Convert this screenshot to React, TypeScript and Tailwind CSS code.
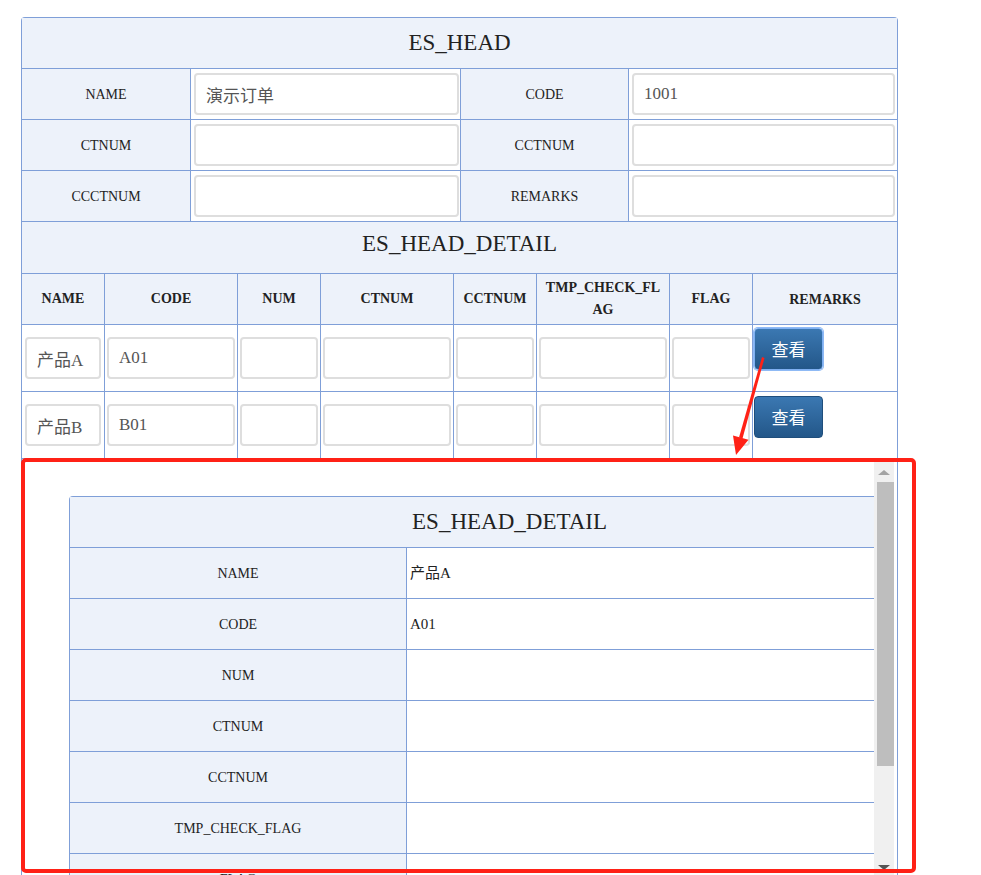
import React from "react";

const SERIF = "font-['Liberation_Serif','Noto_Sans_CJK_SC',serif]";
const LINE = "border-[#7f9fd8]";

const HEAD_ROWS = [
  ["NAME", "演示订单", "CODE", "1001"],
  ["CTNUM", "", "CCTNUM", ""],
  ["CCCTNUM", "", "REMARKS", ""],
];

const COLS = [
  { label: "NAME", w: "w-[82px]", iw: "w-[76px] ml-[3px]" },
  { label: "CODE", w: "w-[133px]", iw: "w-[128px] ml-[2px]" },
  { label: "NUM", w: "w-[83px]", iw: "w-[78px] ml-[2px]" },
  { label: "CTNUM", w: "w-[133px]", iw: "w-[128px] ml-[2px]" },
  { label: "CCTNUM", w: "w-[83px]", iw: "w-[78px] ml-[2px]" },
  { label: "TMP_CHECK_FLAG", w: "w-[133px]", iw: "w-[128px] ml-[2px]" },
  { label: "FLAG", w: "w-[83px]", iw: "w-[78px] ml-[2px]" },
];

const ITEMS = [
  ["产品A", "A01"],
  ["产品B", "B01"],
];

const POPUP_ROWS = [
  ["NAME", "产品A"],
  ["CODE", "A01"],
  ["NUM", ""],
  ["CTNUM", ""],
  ["CCTNUM", ""],
  ["TMP_CHECK_FLAG", ""],
  ["FLAG", ""],
  ["REMARKS", ""],
];

function Field({ value, className }: { value: string; className: string }) {
  return (
    <input
      readOnly
      value={value}
      className={`${className} h-[42px] rounded-[4px] border-2 border-[#dedede] bg-white pl-[10px] text-[17px] text-[#555] outline-none ${SERIF}`}
    />
  );
}

function Title({ text, className = "" }: { text: string; className?: string }) {
  return (
    <div className={`flex items-center justify-center bg-[#edf2fa] text-[23px] text-[#222] ${SERIF} ${className}`}>
      {text}
    </div>
  );
}

function ViewButton({ focused }: { focused?: boolean }) {
  return (
    <button
      className={`h-[42px] w-[69px] rounded-[4px] border bg-gradient-to-b from-[#3b78b2] to-[#235789] text-[17px] text-white font-['Noto_Sans_CJK_SC',sans-serif] ${
        focused ? "border-[#7fb0f2] ring-1 ring-[#8fbaf5]" : "border-[#1f4e7c]"
      }`}
    >
      查看
    </button>
  );
}

function Scrollbar() {
  return (
    <div className="flex h-full w-[20px] shrink-0 flex-col items-center bg-[#f0f0f0]">
      <div className="mt-[8px] h-0 w-0 border-x-[6px] border-b-[5px] border-x-transparent border-b-[#a3a3a3]" />
      <div className="mt-[7px] ml-[2px] h-[284px] w-[17px] bg-[#bebebe]" />
      <div className="flex-1" />
      <div className="mb-[12px] h-0 w-0 border-x-[6px] border-t-[5px] border-x-transparent border-t-[#555]" />
    </div>
  );
}

export default function App() {
  return (
    <div className="relative h-[875px] w-[981px] overflow-hidden bg-white pl-[21px] pt-[17px]">
      {/* Main form */}
      <div className={`w-[877px] rounded-tl-[4px] rounded-tr-[4px] border-x border-t ${LINE}`}>
        <Title text="ES_HEAD" className="h-[50px]" />
        {HEAD_ROWS.map(([l1, v1, l2, v2]) => (
          <div key={l1} className={`flex h-[51px] border-t ${LINE}`}>
            <div className={`flex w-[168px] items-center justify-center bg-[#edf2fa] text-[14px] text-[#222] ${SERIF}`}>{l1}</div>
            <div className={`flex w-[270px] items-center border-l ${LINE}`}>
              <Field value={v1} className="ml-[3px] w-[265px]" />
            </div>
            <div className={`flex w-[168px] items-center justify-center border-l bg-[#edf2fa] text-[14px] text-[#222] ${LINE} ${SERIF}`}>{l2}</div>
            <div className={`flex w-[269px] items-center border-l ${LINE}`}>
              <Field value={v2} className="ml-[3px] w-[263px]" />
            </div>
          </div>
        ))}

        <div className={`border-t ${LINE}`}>
          <Title text="ES_HEAD_DETAIL" className="h-[51px] pb-[7px]" />
        </div>

        {/* Detail header */}
        <div className={`flex h-[51px] border-t bg-[#edf2fa] ${LINE}`}>
          {COLS.map((c, i) => (
            <div
              key={c.label}
              className={`flex ${c.w} items-center justify-center break-all px-[6px] text-center text-[14px] font-bold leading-[22px] text-[#222] ${SERIF} ${i ? `border-l ${LINE}` : ""}`}
            >
              {c.label}
            </div>
          ))}
          <div className={`flex w-[145px] items-center justify-center border-l text-[14px] font-bold text-[#222] ${LINE} ${SERIF}`}>
            REMARKS
          </div>
        </div>

        {ITEMS.map(([name, code], r) => (
          <div key={name} className={`flex h-[67px] border-t ${LINE}`}>
            {COLS.map((c, i) => (
              <div key={c.label} className={`flex ${c.w} items-center ${i ? `border-l ${LINE}` : ""}`}>
                <Field value={i === 0 ? name : i === 1 ? code : ""} className={c.iw} />
              </div>
            ))}
            <div className={`w-[145px] border-l pl-[1px] ${LINE} ${r === 0 ? "pt-[3px]" : "pt-[4px]"}`}>
              <ViewButton focused={r === 0} />
            </div>
          </div>
        ))}
        <div className={`h-[420px] border-t ${LINE}`} />
      </div>

      {/* Detail popup layer */}
      <div className="absolute left-[22px] top-[462px] flex h-[420px] w-[872px] bg-white">
        <div className="flex-1 overflow-hidden pl-[47px] pt-[34px]">
          <div className={`w-[880px] rounded-tl-[4px] border-l border-t ${LINE}`}>
            <Title text="ES_HEAD_DETAIL" className="h-[50px]" />
            {POPUP_ROWS.map(([label, value]) => (
              <div key={label} className={`flex h-[51px] border-t ${LINE}`}>
                <div className={`flex w-[336px] items-center justify-center bg-[#edf2fa] text-[14px] text-[#222] ${SERIF}`}>{label}</div>
                <div className={`flex flex-1 items-center border-l pl-[3px] text-[15px] text-[#222] ${LINE} ${SERIF}`}>{value}</div>
              </div>
            ))}
          </div>
        </div>
        <Scrollbar />
      </div>

      {/* Annotation: red frame and arrow */}
      <div className="pointer-events-none absolute left-[21px] top-[458px] h-[415px] w-[895px] rounded-[5px] border-4 border-[#ff2116]" />
      <svg className="pointer-events-none absolute left-0 top-0" width="981" height="875">
        <polygon points="762,357 764.5,358 742.5,438.6 739,437.6" fill="#ff2116" />
        <polygon points="736,455 733,435.6 748.5,439.8" fill="#ff2116" />
      </svg>
    </div>
  );
}
